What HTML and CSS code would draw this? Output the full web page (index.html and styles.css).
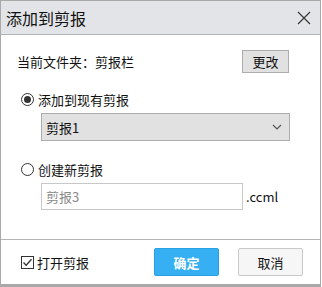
FILE: index.html
```html
<!DOCTYPE html>
<html lang="zh-CN">
    <head>
        <meta charset="UTF-8">
        <meta name="viewport" content="width=device-width, initial-scale=1.0">
        <title>添加到剪报</title>
        <link rel="stylesheet" href="styles.css">
    </head>
    <body>
        <div class="dialog">

            <div class="titlebar">
                <span class="title">添加到剪报</span>
                <svg class="close" width="14" height="14" viewBox="0 0 14 14">
                    <path d="M1 1 L13 13 M13 1 L1 13" stroke="#333" stroke-width="1.1" fill="none"/>
                </svg>
            </div>

            <div class="content">
                <div class="folder-row">
                    <span>当前文件夹：剪报栏</span>
                    <button class="btn btn-small">更改</button>
                </div>

                <div class="option">
                    <span class="radio checked"></span>
                    <span>添加到现有剪报</span>
                </div>
                <div class="select">
                    <span>剪报1</span>
                    <svg width="10" height="6" viewBox="0 0 10 6">
                        <polyline points="1,1 5,5 9,1" stroke="#555" stroke-width="1.2" fill="none"/>
                    </svg>
                </div>

                <div class="option option-second">
                    <span class="radio"></span>
                    <span>创建新剪报</span>
                </div>
                <div class="name-row">
                    <input class="name-input" type="text" placeholder="剪报3">
                    <span class="ext">.ccml</span>
                </div>
            </div>

            <div class="footer">
                <div class="check-row">
                    <span class="checkbox">
                        <svg width="11" height="11" viewBox="0 0 11 11">
                            <polyline points="1.5,5.5 4.2,8.3 9.5,2.2" stroke="#333" stroke-width="1.3" fill="none"/>
                        </svg>
                    </span>
                    <span>打开剪报</span>
                </div>
                <div class="actions">
                    <button class="btn btn-primary">确定</button>
                    <button class="btn btn-light">取消</button>
                </div>
            </div>

        </div>
    </body>
</html>
```

FILE: styles.css
```css
* {
    box-sizing: border-box;
}

body {
    margin: 0;
    background: #fff;
    font-family: "Noto Sans CJK SC", "Noto Sans", sans-serif;
    font-size: 13px;
    color: #111;
}

.dialog {
    width: 321px;
    height: 287px;
    border: 1px solid #a9a9a9;
    border-bottom-width: 3px;
    display: flex;
    flex-direction: column;
    background: #fff;
}

.titlebar {
    height: 34px;
    background: #e3e4e7;
    border-bottom: 1px solid #b4b4b4;
    display: flex;
    align-items: center;
    justify-content: space-between;
    padding: 0 9px 0 5px;
}

.title {
    font-size: 16px;
    color: #111;
}

.close {
    display: block;
}

.content {
    flex: 1;
    padding: 15px 31px 0 16px;
}

.folder-row {
    display: flex;
    align-items: center;
    justify-content: space-between;
    height: 23px;
}

.btn {
    font-family: inherit;
    font-size: 13px;
    color: #111;
    padding: 0;
    cursor: pointer;
}

.btn-small {
    width: 47px;
    height: 23px;
    background: #e1e1e1;
    border: 1px solid #adadad;
}

.option {
    display: flex;
    align-items: center;
    gap: 4px;
    height: 18px;
    margin-top: 17px;
    padding-left: 4px;
}

.option-second {
    margin-top: 19px;
}

.radio {
    width: 13px;
    height: 13px;
    border: 1px solid #333;
    border-radius: 50%;
    display: flex;
    align-items: center;
    justify-content: center;
}

.radio.checked::after {
    content: "";
    width: 7px;
    height: 7px;
    border-radius: 50%;
    background: #333;
}

.select {
    margin: 5px 0 0 24px;
    width: 249px;
    height: 28px;
    background: #e1e1e1;
    border: 1px solid #adadad;
    display: flex;
    align-items: center;
    justify-content: space-between;
    padding: 0 7px 0 4px;
}

.name-row {
    display: flex;
    align-items: center;
    margin: 5px 0 0 24px;
    gap: 3px;
}

.name-input {
    width: 202px;
    height: 27px;
    border: 1px solid #c8c8c8;
    font-family: inherit;
    font-size: 13px;
    padding: 0 4px;
    outline: none;
}

.name-input::placeholder {
    color: #8a8a8a;
}

.ext {
    color: #111;
}

.footer {
    height: 45px;
    border-top: 1px solid #b4b4b4;
    display: flex;
    align-items: center;
    justify-content: space-between;
    padding: 0 17px 0 20px;
}

.check-row {
    display: flex;
    align-items: center;
    gap: 3px;
}

.checkbox {
    width: 13px;
    height: 13px;
    border: 1px solid #333;
    display: flex;
    align-items: center;
    justify-content: center;
}

.actions {
    display: flex;
    gap: 19px;
}

.btn-primary,
.btn-light {
    width: 65px;
    height: 28px;
    border-radius: 2px;
}

.btn-primary {
    background: #36b0f2;
    border: 1px solid #2aa0e4;
    color: #fff;
    font-weight: bold;
}

.btn-light {
    background: #f6f6f6;
    border: 1px solid #c9c9c9;
}
```
